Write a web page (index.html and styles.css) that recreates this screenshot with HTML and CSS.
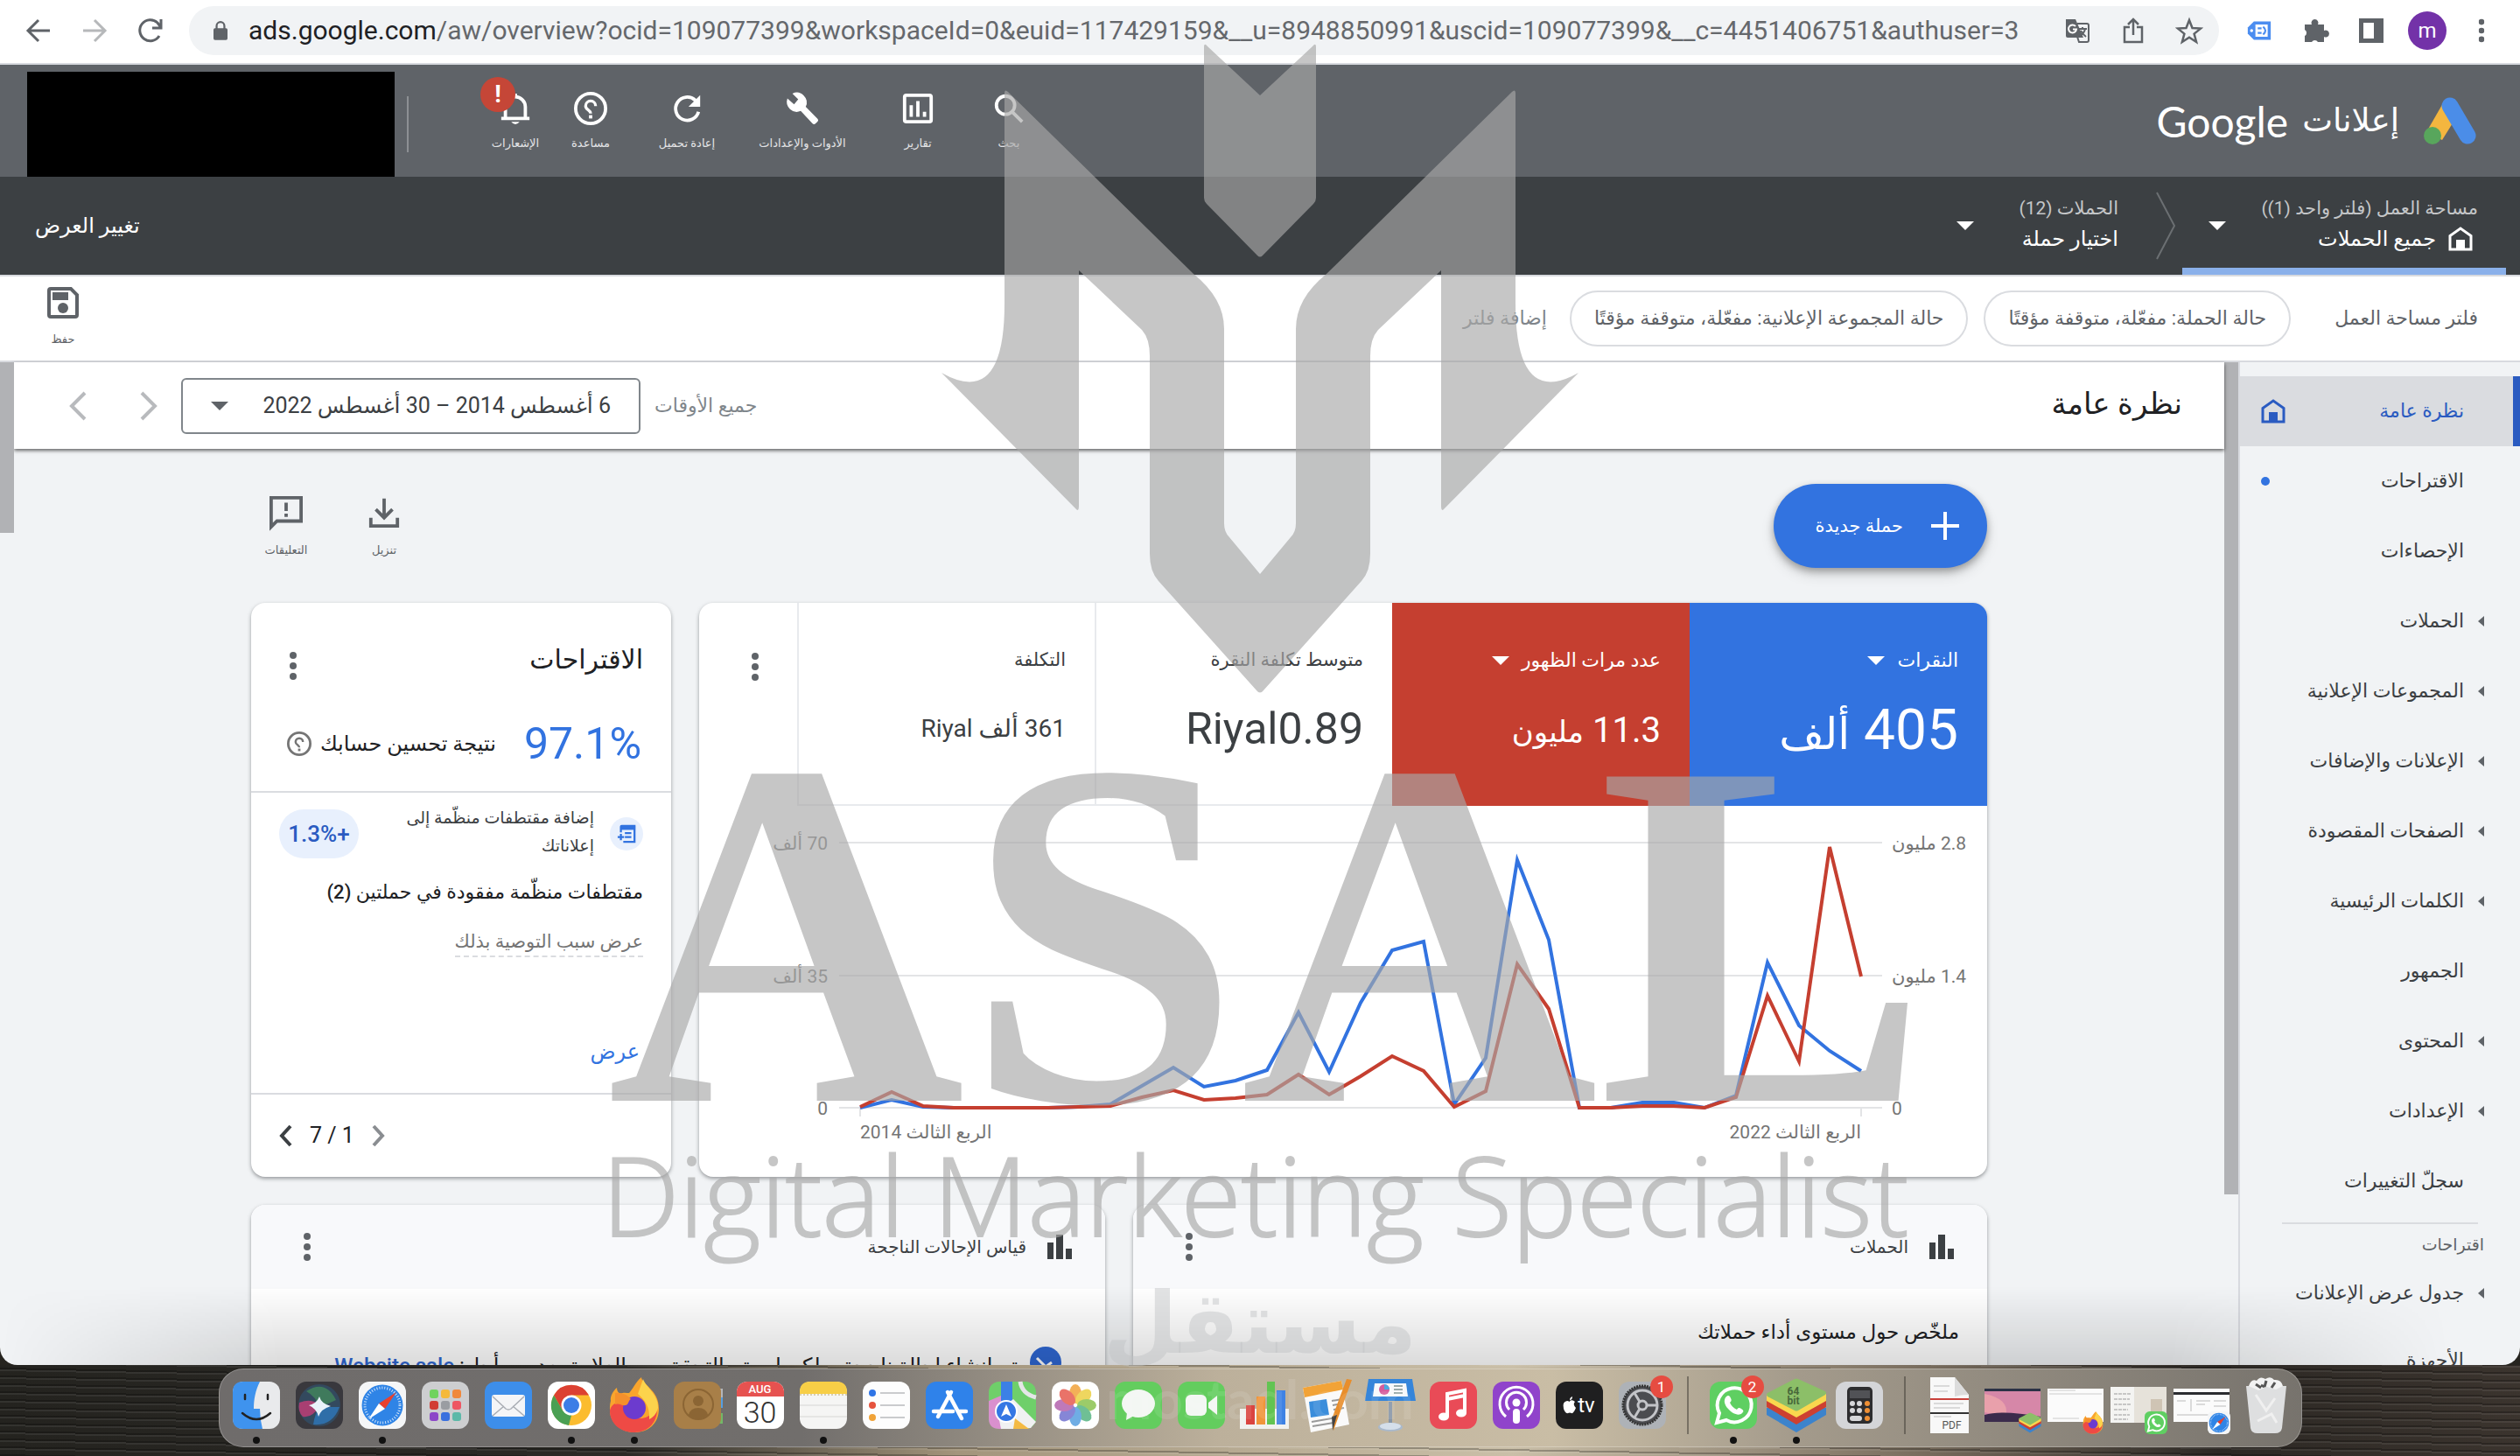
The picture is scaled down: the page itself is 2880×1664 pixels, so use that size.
FILE: index.html
```html
<!DOCTYPE html>
<html lang="ar" dir="rtl">
<head>
  <meta charset="UTF-8">
  <meta name="viewport" content="width=device-width, initial-scale=1.0">
  <title>نظرة عامة - إعلانات Google</title>
  <link rel="stylesheet" href="styles.css">
</head>
<body>
  <svg class="sprite" aria-hidden="true">
    <symbol id="dots" viewBox="0 0 8 34"><circle cx="4" cy="5" r="4"/><circle cx="4" cy="17" r="4"/><circle cx="4" cy="29" r="4"/></symbol>
    <symbol id="caret" viewBox="0 0 20 10"><path d="M0 0h20L10 10z"/></symbol>
    <symbol id="bars" viewBox="0 0 28 28"><path d="M0 9h7v19H0zM10 0h8v28h-8zM21 16h7v12h-7z"/></symbol>
    <symbol id="home" viewBox="0 0 28 28"><path d="M2 26V10.500L14 2l12 8.500V26z" fill="none" stroke="currentColor" stroke-width="3"/><path d="M9 15h10v11H9z"/></symbol>
    <symbol id="help" viewBox="0 0 40 40"><circle cx="20" cy="20" r="18" fill="none" stroke="currentColor" stroke-width="4"/><path d="M26 17a6 6 0 0 0-12 0c0 5 6 4.500 6 9" fill="none" stroke="currentColor" stroke-width="3.500"/><path d="M18 28h4v4h-4z"/></symbol>
    <symbol id="chrome" viewBox="0 0 54 54"><rect width="54" height="54" rx="12" fill="#fff"/><circle cx="27" cy="27" r="23" fill="#fbbc2f"/><path d="M7 15.500A23 23 0 0 1 47 15.500H27l-10 17.500z" fill="#dc4132"/><path d="M7 15.500L17 33l10 5.500L24 50A23 23 0 0 1 7 15.500z" fill="#4aa053"/><circle cx="27" cy="27" r="11.500" fill="#fff"/><circle cx="27" cy="27" r="9" fill="#3c7de6"/></symbol>
    <symbol id="firefox" viewBox="0 0 60 64"><path d="M3 27C2 22 6 15 10 12c0 4 2 6 4 7 3-2 7-1 10-1 4-4 7-12 14-18 1 9 20 14 20 36 0 17-12 27-28 27S2 51 2 38c0-5 0-7 1-11z" fill="#f9a52d"/><path d="M2 38c2-8 10-12 16-6 2 9 9 16 20 15 8-1 13-5 18-13 1 17-10 29-26 29S2 53 2 38z" fill="#ee4a45"/><path d="M40 2c2 8 18 18 17 33-2 8-6 11-10 13 1-14-5-22-13-29z" fill="#fcd34c"/><circle cx="30" cy="35" r="13" fill="#6c3bce"/><path d="M8 18c8-1 14 2 18 7-3 1-2 6-6 7-5 1-7-3-12-1z" fill="#f5902c"/></symbol>
    <symbol id="safari" viewBox="0 0 54 54"><rect width="54" height="54" rx="12" fill="#f5f6f7"/><circle cx="27" cy="27" r="23.500" fill="#2f84e6"/><circle cx="27" cy="27" r="20" fill="none" stroke="#cfe4fb" stroke-width="3" stroke-dasharray="1 2"/><path d="M43 12L30 31l-7-6z" fill="#e8412f"/><path d="M11 43l12-18 7 6z" fill="#fff"/></symbol>
    <symbol id="whatsapp" viewBox="0 0 54 54"><rect width="54" height="54" rx="12" fill="#5fcf62"/><path d="M8 47l3-11A19.500 19.500 0 1 1 19 44z" fill="none" stroke="#fff" stroke-width="4"/><path d="M19 17c2-2 4-1 5 2 1 2 1 3-1 5 2 4 4 6 8 8 2-3 3-2 5-1 3 2 3 3 1 5-4 4-12 0-16-5-4-4-6-10-2-14z" fill="#fff"/></symbol>
    <symbol id="bluestacks" viewBox="0 0 70 62"><path d="M1 42l34 20 34-20v-8H1z" fill="#3c83cc"/><path d="M1 33l34 20 34-20v-8H1z" fill="#cd4031"/><path d="M1 26l34 19 34-19v-8H1z" fill="#f9d74e"/><path d="M33 1q2-1 4 0l31 14q2 2 0 4L37 37q-2 1-4 0L2 21q-2-2 0-4z" fill="#8cbf68"/></symbol>
  </svg>

  <div class="window">
    <!-- browser toolbar -->
    <div class="browser" dir="ltr">
      <button class="nav-btn" aria-label="Back"><svg viewBox="0 0 28 28"><path d="M27 14H3M14 2L2 14l12 12"/></svg></button>
      <button class="nav-btn off" aria-label="Forward"><svg viewBox="0 0 28 28"><path d="M1 14h24M14 2l12 12-12 12"/></svg></button>
      <button class="nav-btn" aria-label="Reload"><svg viewBox="0 0 28 28"><path d="M24 20A12 12 0 1 1 22 5l3 4M26 1v10H16"/></svg></button>
      <div class="address">
        <svg class="lock" viewBox="0 0 18 24"><rect y="9" width="18" height="15" rx="2" fill="#5f6368"/><path d="M4 10V6a5 5 0 0 1 10 0v4" fill="none" stroke="#5f6368" stroke-width="2.500"/></svg>
        <span class="url"><b>ads.google.com</b>/aw/overview?ocid=109077399&amp;workspaceId=0&amp;euid=117429159&amp;__u=8948850991&amp;uscid=109077399&amp;__c=4451406751&amp;authuser=3</span>
        <div class="address-icons">
          <button aria-label="Translate"><svg viewBox="0 0 28 28"><path d="M1 1h11l9 21H3q-2 0-2-2z" fill="#5f6368"/><path d="M14 6h11q2 0 2 2v17q0 2-2 2h-9l-2-6" fill="none" stroke="#5f6368" stroke-width="2"/><path d="M12 9a4.500 4.500 0 1 0 1 3.500H9" fill="none" stroke="#fff" stroke-width="2"/><path d="M16 12h9M20 10v2M23 12q-1 5-6 8M18 14q2 4 6 7" fill="none" stroke="#5f6368" stroke-width="2"/></svg></button>
          <button aria-label="Share"><svg viewBox="0 0 28 28"><path d="M10 10H4v17h20V10h-6M14 19V2M8 7l6-6 6 6" fill="none" stroke="#5f6368" stroke-width="2.500"/></svg></button>
          <button aria-label="Bookmark"><svg viewBox="0 0 28 28"><path d="M14 2l3.500 9 9.500.6-7.400 6 2.500 9.400-8.100-5.300L5.900 27l2.500-9.400-7.400-6 9.500-.6z" fill="none" stroke="#5f6368" stroke-width="2.500"/></svg></button>
        </div>
      </div>
      <div class="extensions">
        <button aria-label="Tag Assistant"><svg viewBox="0 0 32 28"><path d="M9 2h22v24H9L1 18v-8z" fill="#4b8df0"/><circle cx="6" cy="14" r="2" fill="#fff"/><path d="M11 6h16v16H11z" fill="#fff"/><path d="M14 11h5M14 17h5M21 9q6 5 0 10" fill="none" stroke="#4b8df0" stroke-width="2.500"/></svg></button>
        <button aria-label="Extensions"><svg viewBox="0 0 28 28"><path d="M2 7h8a4 4 0 1 1 7 0h7v7a4 4 0 1 1 0 7v6h-7a4 4 0 0 0-7 0H2v-7a4 4 0 0 0 0-7z" fill="#5f6368"/></svg></button>
        <button aria-label="Side panel"><svg viewBox="0 0 28 28"><path d="M0 0h28v28H0zM5 5v18h12V5z" fill="#5f6368" fill-rule="evenodd"/></svg></button>
        <button class="avatar" aria-label="Profile">m</button>
        <button aria-label="Menu"><svg class="menu-dots" viewBox="0 0 8 34" fill="#5f6368"><use href="#dots"/></svg></button>
      </div>
    </div>

    <!-- product header -->
    <header class="topbar">
      <a class="logo" href="#">
        <svg viewBox="0 0 60 54"><path d="M22 7L3 40l18 9 18-29z" fill="#f4b63f"/><path d="M30 10l20 34" stroke="#4b8de8" stroke-width="19" stroke-linecap="round"/><circle cx="10" cy="44" r="10" fill="#58a65c"/></svg>
        <span>إعلانات <b>Google</b></span>
      </a>
      <nav class="tools">
        <button class="tool"><svg viewBox="0 0 40 40"><circle cx="16" cy="16" r="11" fill="none" stroke="#fff" stroke-width="4"/><path d="M24 24l12 12" stroke="#fff" stroke-width="4"/></svg><span>بحث</span></button>
        <button class="tool"><svg viewBox="0 0 40 40"><rect x="4" y="4" width="32" height="32" rx="2" fill="none" stroke="#fff" stroke-width="4"/><path d="M12 16v14M20 11v19M28 24v6" stroke="#fff" stroke-width="4"/></svg><span>تقارير</span></button>
        <button class="tool tool-wide"><svg viewBox="0 0 40 40"><path d="M38 32L24 18A12 12 0 0 0 8 2l7 7-5 6-8-7A12 12 0 0 0 18 23l14 15q2 2 4 0l2-2q2-2 0-4z" fill="#fff"/></svg><span>الأدوات والإعدادات</span></button>
        <button class="tool"><svg viewBox="0 0 40 40"><path d="M34 24A14 14 0 1 1 30 10l4 5" fill="none" stroke="#fff" stroke-width="4"/><path d="M36 4v14H22z" fill="#fff"/></svg><span>إعادة تحميل</span></button>
        <button class="tool tool-help"><svg viewBox="0 0 40 40" fill="#fff" color="#fff"><use href="#help"/></svg><span>مساعدة</span></button>
        <button class="tool tool-alerts"><svg viewBox="0 0 40 40"><path d="M8 32V18a12 12 0 0 1 24 0v14M3 32h34" fill="none" stroke="#fff" stroke-width="4"/><path d="M15 36h10q-5 6-10 0M18 2h4v5h-4z" fill="#fff"/></svg><span>الإشعارات</span><i class="alert">!</i></button>
      </nav>
      <div class="account"></div>
    </header>

    <!-- breadcrumbs -->
    <div class="crumbs">
      <button class="crumb active">
        <span class="crumb-text"><small>مساحة العمل (فلتر واحد (1))</small><strong><svg class="i28" fill="currentColor"><use href="#home"/></svg>جميع الحملات</strong></span>
        <svg class="caret"><use href="#caret"/></svg>
      </button>
      <svg class="crumb-sep" viewBox="0 0 22 76"><path d="M1 0l20 38L1 76"/></svg>
      <button class="crumb">
        <span class="crumb-text"><small>الحملات (12)</small><strong>اختيار حملة</strong></span>
        <svg class="caret"><use href="#caret"/></svg>
      </button>
      <button class="change-view">تغيير العرض</button>
    </div>

    <!-- filters -->
    <div class="filters">
      <span class="filters-label">فلتر مساحة العمل</span>
      <button class="chip">حالة الحملة: مفعّلة، متوقفة مؤقتًا</button>
      <button class="chip">حالة المجموعة الإعلانية: مفعّلة، متوقفة مؤقتًا</button>
      <button class="add-filter">إضافة فلتر</button>
      <button class="save"><svg viewBox="0 0 36 36"><path d="M2 4q0-2 2-2h23l7 7v23q0 2-2 2H4q-2 0-2-2z" fill="none" stroke="#5f6368" stroke-width="4"/><path d="M6 6h18v9H6z" fill="#5f6368"/><circle cx="18" cy="24" r="6" fill="#5f6368"/></svg><span>حفظ</span></button>
    </div>

    <div class="workspace">
      <nav class="sidebar">
        <a class="item on" href="#">نظرة عامة<svg class="i28" fill="currentColor"><use href="#home"/></svg></a>
        <a class="item new" href="#">الاقتراحات</a>
        <a class="item" href="#">الإحصاءات</a>
        <a class="item sub" href="#">الحملات</a>
        <a class="item sub" href="#">المجموعات الإعلانية</a>
        <a class="item sub" href="#">الإعلانات والإضافات</a>
        <a class="item sub" href="#">الصفحات المقصودة</a>
        <a class="item sub" href="#">الكلمات الرئيسية</a>
        <a class="item" href="#">الجمهور</a>
        <a class="item sub" href="#">المحتوى</a>
        <a class="item sub" href="#">الإعدادات</a>
        <a class="item" href="#">سجلّ التغييرات</a>
        <p class="sidebar-title">اقتراحات</p>
        <a class="item item-short sub" href="#">جدول عرض الإعلانات</a>
        <a class="item" href="#">الأجهزة</a>
      </nav>
      <div class="scroll"><div class="thumb thumb-long"></div></div>

      <main class="pane">
        <div class="titlebar">
          <h1>نظرة عامة</h1>
          <span class="range-name">جميع الأوقات</span>
          <button class="range"><span>6 أغسطس 2014 – 30 أغسطس 2022</span><svg class="caret"><use href="#caret"/></svg></button>
          <button class="step" aria-label="التالي"><svg viewBox="0 0 20 32"><path d="M2 1l15 15L2 31"/></svg></button>
          <button class="step" aria-label="السابق"><svg viewBox="0 0 20 32"><path d="M18 1L3 16l15 15"/></svg></button>
        </div>

        <div class="content">
          <div class="actions">
            <button class="new-campaign"><svg viewBox="0 0 32 32"><path d="M16 0v32M0 16h32" stroke="#fff" stroke-width="4"/></svg>حملة جديدة</button>
            <div class="page-tools">
              <button class="page-tool"><svg viewBox="0 0 40 40"><path d="M20 3v22M10 16l10 10 10-10M4 26v10h32V26" fill="none" stroke="#5f6368" stroke-width="4"/></svg><span>تنزيل</span></button>
              <button class="page-tool"><svg viewBox="0 0 40 40"><path d="M2 37V2h36v28H9z" fill="none" stroke="#5f6368" stroke-width="4"/><path d="M18 8h4v10h-4zM18 21h4v4h-4z" fill="#5f6368"/></svg><span>التعليقات</span></button>
            </div>
          </div>

          <div class="row">
            <section class="card summary">
              <div class="metrics">
                <button class="metric blue"><span class="label">النقرات<svg class="caret"><use href="#caret"/></svg></span><span class="value v64">405 <span class="v50">ألف</span></span></button>
                <button class="metric red"><span class="label">عدد مرات الظهور<svg class="caret"><use href="#caret"/></svg></span><span class="value v40">11.3 <span class="v34">مليون</span></span></button>
                <button class="metric"><span class="label">متوسط تكلفة النقرة</span><span class="value v50">Riyal0.89</span></button>
                <button class="metric"><span class="label">التكلفة</span><span class="value v28">361 ألف Riyal</span></button>
                <button class="more" aria-label="المزيد"><svg><use href="#dots"/></svg></button>
              </div>
              <svg class="chart" viewBox="0 0 1472 424">
                <path class="grid" d="M160 42h1192M160 194h1192M160 345h1192M184 345v10M1328 345v10"/>
                <g class="axis">
                  <text x="147" y="50">70 ألف</text>
                  <text x="147" y="202">35 ألف</text>
                  <text x="147" y="353">0</text>
                  <g class="far">
                    <text x="1363" y="50">2.8 مليون</text>
                    <text x="1363" y="202">1.4 مليون</text>
                    <text x="1363" y="353">0</text>
                    <text x="184" y="380">الربع الثالث 2014</text>
                  </g>
                  <text x="1328" y="380">الربع الثالث 2022</text>
                </g>
                <polyline class="line clicks" points="184,345 220,336 256,344 291,345 327,345 363,345 399,345 434,344 470,341 506,320 542,299 577,321 613,314 649,302 685,236 720,304 756,225 792,165 828,155 863,341 899,288 935,62 971,153 1006,345 1042,345 1078,339 1114,339 1149,345 1185,331 1221,179 1257,251 1292,280 1328,303"/>
                <polyline class="line views" points="184,344 220,327 256,343 291,345 327,345 363,345 399,345 434,344 470,343 506,333 542,325 577,336 613,334 649,330 685,307 720,330 756,309 792,286 828,303 863,344 899,326 935,181 971,232 1006,345 1042,345 1078,343 1114,343 1149,345 1185,333 1221,217 1257,292 1292,47 1328,195"/>
              </svg>
            </section>

            <section class="card tips">
              <div class="tips-head"><h2>الاقتراحات</h2><button class="more" aria-label="المزيد"><svg><use href="#dots"/></svg></button></div>
              <div class="score"><strong>97.1%</strong><span>نتيجة تحسين حسابك</span><svg class="i28" fill="currentColor"><use href="#help"/></svg></div>
              <div class="tip">
                <div class="tip-row">
                  <span class="tip-icon"><svg viewBox="0 0 24 24"><path d="M5 10V3q0-1 1-1h16v20H8M10 11h8M10 16h8M1 16h8M5 12v8" fill="none" stroke="#3273e0" stroke-width="2.500"/><path d="M5 2h18v5H5z" fill="#3273e0"/></svg></span>
                  <p>إضافة مقتطفات منظّمة إلى إعلاناتك</p>
                  <span class="gain">+1.3%</span>
                </div>
                <h3>مقتطفات منظّمة مفقودة في حملتين (2)</h3>
                <a class="why" href="#">عرض سبب التوصية بذلك</a>
                <a class="view" href="#">عرض</a>
              </div>
              <div class="pager">
                <button class="off" aria-label="السابق"><svg viewBox="0 0 14 24"><path d="M2 1l10 11L2 23"/></svg></button>
                <span>1 / 7</span>
                <button aria-label="التالي"><svg viewBox="0 0 14 24"><path d="M12 1L2 12l10 11"/></svg></button>
              </div>
            </section>
          </div>

          <div class="row">
            <section class="card half">
              <div class="half-head"><svg class="i28" fill="#3c4043"><use href="#bars"/></svg><h4>الحملات</h4><button class="more" aria-label="المزيد"><svg><use href="#dots"/></svg></button></div>
              <p class="half-text">ملخّص حول مستوى أداء حملاتك</p>
            </section>
            <section class="card half">
              <div class="half-head"><svg class="i28" fill="#3c4043"><use href="#bars"/></svg><h4>قياس الإحالات الناجحة</h4><button class="more" aria-label="المزيد"><svg><use href="#dots"/></svg></button></div>
              <p class="half-text status"><svg viewBox="0 0 36 36"><circle cx="18" cy="18" r="18" fill="#2f67d2"/><path d="M8 13l10 10 7-5" fill="none" stroke="#fff" stroke-width="3"/></svg><span>تم إنشاء إحالة ناجحة، ولكن لم يتم التحقق من العلامة بعد من أجل: <a href="#">Website sale</a></span></p>
            </section>
          </div>
        </div>
      </main>
      <div class="scroll"><div class="thumb thumb-short"></div></div>
    </div>
    <div class="window-shade"></div>
  </div>

  <!-- dock -->
  <div class="dock-area" dir="ltr">
    <div class="dock">
      <button class="app open" aria-label="Finder"><svg viewBox="0 0 54 54"><rect width="54" height="54" rx="12" fill="#e9eaec"/><path d="M12 0h19c-5 10-7 20-7 31h7q0 12 3 23H12Q0 54 0 42V12Q0 0 12 0z" fill="#3f93ee"/><path d="M14 15v5M40 15v5M11 36q16 14 32 0" fill="none" stroke="#222" stroke-width="2.500" stroke-linecap="round"/></svg></button>
      <button class="app" aria-label="Siri"><svg viewBox="0 0 54 54"><rect width="54" height="54" rx="12" fill="#39383d"/><circle cx="27" cy="27" r="24" fill="#33495e"/><path d="M4 24q16-6 23 4-8 14-19 12-6-6-4-16z" fill="#a83f72"/><path d="M12 11q22-14 34 10-8 4-19 8-4-12-15-18z" fill="#3f7a5c"/><path d="M50 29q-8 22-30 20 2-14 8-20z" fill="#2f6ea8"/><path d="M27 17q2 8 13 11-11 3-14 12-2-9-11-13 9-2 12-10z" fill="#eaf2fb"/></svg></button>
      <button class="app open" aria-label="Safari"><svg><use href="#safari"/></svg></button>
      <button class="app" aria-label="Launchpad"><svg viewBox="0 0 54 54"><rect width="54" height="54" rx="12" fill="#cdced0"/><g><rect x="9" y="9" width="10" height="10" rx="3" fill="#70d35d"/><rect x="22" y="9" width="10" height="10" rx="3" fill="#f5b93c"/><rect x="35" y="9" width="10" height="10" rx="3" fill="#f0883c"/><rect x="9" y="22" width="10" height="10" rx="3" fill="#d13d34"/><rect x="22" y="22" width="10" height="10" rx="3" fill="#9a9da2"/><rect x="35" y="22" width="10" height="10" rx="3" fill="#ee5763"/><rect x="9" y="35" width="10" height="10" rx="3" fill="#8c47c8"/><rect x="22" y="35" width="10" height="10" rx="3" fill="#3a70de"/><rect x="35" y="35" width="10" height="10" rx="3" fill="#5cb9a8"/></g></svg></button>
      <button class="app" aria-label="Mail"><svg viewBox="0 0 54 54"><rect width="54" height="54" rx="12" fill="#3d8eea"/><rect x="8" y="15" width="38" height="25" rx="3" fill="#f4f5f7"/><path d="M9 17l15 14q3 2 6 0l15-14M9 39l13-11M45 39L32 28" fill="none" stroke="#a9adb4" stroke-width="1.500"/></svg></button>
      <button class="app open" aria-label="Chrome"><svg><use href="#chrome"/></svg></button>
      <button class="app open" aria-label="Firefox"><svg class="tall"><use href="#firefox"/></svg></button>
      <button class="app" aria-label="Contacts"><svg viewBox="0 0 54 54"><path d="M50 8h6v10h-6z" fill="#b4b6bb"/><path d="M50 18h6v12h-6z" fill="#559ee2"/><path d="M50 36h6v12h-6z" fill="#72b867"/><rect width="54" height="54" rx="12" fill="#a87f48"/><circle cx="28" cy="26" r="17" fill="none" stroke="#8b6534" stroke-width="2"/><circle cx="28" cy="22" r="6" fill="#8b6534"/><path d="M17 38q2-8 11-8t11 8q-11 9-22 0z" fill="#8b6534"/></svg></button>
      <button class="app calendar" aria-label="Calendar"><span class="month">AUG</span><span class="day">30</span></button>
      <button class="app open" aria-label="Notes"><svg viewBox="0 0 54 54"><rect width="54" height="54" rx="12" fill="#f5f5f4"/><path d="M0 14v-2Q0 0 12 0h30q12 0 12 12v2z" fill="#f7ce46"/><path d="M0 27h54M0 40h54" stroke="#d6d6d4"/><path d="M0 15h54" stroke="#b9a56a" stroke-dasharray="2 2"/></svg></button>
      <button class="app" aria-label="Reminders"><svg viewBox="0 0 54 54"><rect width="54" height="54" rx="12" fill="#fdfdfd"/><path d="M20 13h28M20 27h28M20 41h28" stroke="#b9babd" stroke-width="1.500"/><circle cx="11" cy="13" r="4" fill="#2f74e6"/><circle cx="11" cy="27" r="4" fill="#e5533d"/><circle cx="11" cy="41" r="4" fill="#f0a338"/></svg></button>
      <button class="app" aria-label="App Store"><svg viewBox="0 0 54 54"><rect width="54" height="54" rx="12" fill="#2f82ea"/><path d="M29 12L14 40M25 12l16 30M9 34h22M37 34h9" stroke="#fff" stroke-width="4.500" stroke-linecap="round"/></svg></button>
      <button class="app" aria-label="Maps"><svg viewBox="0 0 54 54"><rect width="54" height="54" rx="12" fill="#6fcf6a"/><path d="M0 22l14-6v38h-2Q0 54 0 42z" fill="#d990ce"/><path d="M14 0h13v54H14z" fill="#3c80e6"/><path d="M10 34l18-14 26 26-6 7-12 1H14z" fill="#f0f1f2"/><path d="M30 42l16 12H28z" fill="#f4ba44"/><path d="M36 0q2 14 18 18" fill="none" stroke="#e5e6e8" stroke-width="5"/><circle cx="20" cy="34" r="12" fill="#3577e4" stroke="#fff" stroke-width="2"/><path d="M20 26l6 14-6-3-6 3z" fill="#fff"/></svg></button>
      <button class="app" aria-label="Photos"><svg viewBox="0 0 54 54"><rect width="54" height="54" rx="12" fill="#fff"/><g opacity=".85"><ellipse cx="27" cy="14" rx="7" ry="11" fill="#f2a33b"/><ellipse cx="27" cy="14" rx="7" ry="11" fill="#ecd044" transform="rotate(45 27 27)"/><ellipse cx="27" cy="14" rx="7" ry="11" fill="#8bc34f" transform="rotate(90 27 27)"/><ellipse cx="27" cy="14" rx="7" ry="11" fill="#57b583" transform="rotate(135 27 27)"/><ellipse cx="27" cy="14" rx="7" ry="11" fill="#579fe0" transform="rotate(180 27 27)"/><ellipse cx="27" cy="14" rx="7" ry="11" fill="#7272cf" transform="rotate(225 27 27)"/><ellipse cx="27" cy="14" rx="7" ry="11" fill="#b562ad" transform="rotate(270 27 27)"/><ellipse cx="27" cy="14" rx="7" ry="11" fill="#e65b4f" transform="rotate(315 27 27)"/></g></svg></button>
      <button class="app" aria-label="Messages"><svg viewBox="0 0 54 54"><rect width="54" height="54" rx="12" fill="#63cd5e"/><ellipse cx="27" cy="25" rx="19" ry="16" fill="#f3f7f3"/><path d="M14 36l-1 8 9-5z" fill="#f3f7f3"/></svg></button>
      <button class="app" aria-label="FaceTime"><svg viewBox="0 0 54 54"><rect width="54" height="54" rx="12" fill="#63cd5e"/><rect x="9" y="15" width="24" height="24" rx="6" fill="#f3f7f3"/><path d="M35 24l10-8v22l-10-8z" fill="#f3f7f3"/></svg></button>
      <button class="app" aria-label="Numbers"><svg viewBox="0 0 54 54"><path d="M-1 31h56v23H-1z" fill="#f1f1ef"/><path d="M6 27h10v22H6z" fill="#da4440"/><path d="M18 17h10v32H18z" fill="#f0953a"/><path d="M30 0h9v49h-9z" fill="#62c452"/><path d="M41 10h10v39H41z" fill="#3e82e4"/></svg></button>
      <button class="app" aria-label="Pages"><svg class="tall" viewBox="0 0 60 64"><path d="M2 12L46 4l9 50-44 9z" fill="#fafafa"/><path d="M2 12L46 4l2 10L4 23z" fill="#f2a337"/><path d="M9 28l20-3 3 18-21 3z" fill="#3a8ddb"/><path d="M35 27l12-2M36 32l12-2M37 37l12-2M12 51l28-5M13 56l24-4" stroke="#999" stroke-width="2"/><path d="M52 2l6 1-16 44-5 14-1-16z" fill="#e88e2c"/><path d="M41 43l-5 18-1-16z" fill="#444"/></svg></button>
      <button class="app" aria-label="Keynote"><svg class="tall" viewBox="0 0 60 64"><path d="M28 28h4v30h-4z" fill="#8796a8"/><ellipse cx="30" cy="57" rx="14" ry="5" fill="#a9b9cc"/><ellipse cx="30" cy="56" rx="12" ry="4" fill="#d5dfea"/><path d="M5 2h50l4 25H1z" fill="#3585da"/><path d="M12 7h36l2 15H10z" fill="#f7f8fa"/><circle cx="23" cy="14" r="6" fill="#d55c9c"/><path d="M23 8a6 6 0 0 1 6 6h-6z" fill="#4aa8e0"/><path d="M34 10h10M34 14h10M34 18h10" stroke="#9aa" stroke-width="2"/></svg></button>
      <button class="app" aria-label="Music"><svg viewBox="0 0 54 54"><rect width="54" height="54" rx="12" fill="#e94b57"/><path d="M20 40V14l20-4v26M20 20l20-4" fill="none" stroke="#fff" stroke-width="4"/><ellipse cx="16" cy="40" rx="6" ry="4.500" fill="#fff"/><ellipse cx="36" cy="36" rx="6" ry="4.500" fill="#fff"/></svg></button>
      <button class="app" aria-label="Podcasts"><svg viewBox="0 0 54 54"><rect width="54" height="54" rx="12" fill="#9043cb"/><path d="M15 40a19 19 0 1 1 24 0M19 32a11.500 11.500 0 1 1 16 0" fill="none" stroke="#fff" stroke-width="3"/><circle cx="27" cy="24" r="4.500" fill="#fff"/><rect x="23" y="31" width="8" height="17" rx="4" fill="#fff"/></svg></button>
      <button class="app tv" aria-label="TV"><svg viewBox="0 0 16 20"><path d="M11 0q0 4-3 4 0-3 3-4zM8 5q3-2 6 1-3 3 1 7-3 7-5 6-2-1-4 0Q3 20 1 14q-2-8 4-9 1 0 3 1z" fill="#fff"/></svg><span>tv</span></button>
      <button class="app" aria-label="Settings"><svg viewBox="0 0 54 54"><rect width="54" height="54" rx="12" fill="#aeb2b7"/><circle cx="27" cy="27" r="22" fill="#4b4c50" stroke="#333" stroke-width="3" stroke-dasharray="2 1"/><circle cx="27" cy="27" r="17" fill="none" stroke="#c3c4c8" stroke-width="3"/><circle cx="27" cy="27" r="5" fill="none" stroke="#c3c4c8" stroke-width="3"/><path d="M32 27h12M24 23l-6-10M24 31l-6 10" stroke="#c3c4c8" stroke-width="3"/></svg><i class="badge">1</i></button>
      <i class="dock-sep"></i>
      <button class="app open" aria-label="WhatsApp"><svg><use href="#whatsapp"/></svg><i class="badge">2</i></button>
      <button class="app open" aria-label="BlueStacks"><svg class="wide"><use href="#bluestacks"/></svg><em class="bit">64<br>bit</em></button>
      <button class="app" aria-label="Calculator"><svg viewBox="0 0 54 54"><rect width="54" height="54" rx="12" fill="#d4d5d8"/><rect x="13" y="6" width="29" height="42" rx="5" fill="#2d2d2f"/><path d="M16 10h23v9H16z" fill="#515256"/><g fill="#d8d8da"><circle cx="19" cy="25" r="3"/><circle cx="27" cy="25" r="3"/><circle cx="19" cy="33" r="3"/><circle cx="27" cy="33" r="3"/><rect x="16" y="39" width="14" height="6" rx="3"/></g><g fill="#ee8f35"><circle cx="36" cy="25" r="3"/><circle cx="36" cy="33" r="3"/><circle cx="36" cy="42" r="3"/></g></svg></button>
      <i class="dock-sep"></i>
      <button class="file" aria-label="PDF"><svg viewBox="0 0 44 64"><path d="M0 0h28l16 20v44H0z" fill="#f8f8f8"/><path d="M28 0l16 20q-10 0-16 2z" fill="#dcdcdc"/><path d="M0 24h44v2H0z" fill="#c9403a"/><path d="M0 40h44v2H0z" fill="#333"/><path d="M4 10h18M4 16h16M4 30h34M4 35h30M4 45h20" stroke="#bbb"/></svg><span>PDF</span></button>
      <div class="minimized">
        <button class="mini" aria-label="BlueStacks"><svg viewBox="0 0 64 50"><path d="M0 6h64v38H0z" fill="#d687a8"/><path d="M0 6h64v3H0z" fill="#2b3246"/><path d="M0 12q30 6 24 26L0 33z" fill="#e9a0ab"/><path d="M0 36q20-6 64 2v6H0z" fill="#3b2b4c"/></svg><svg class="mini-app"><use href="#bluestacks"/></svg></button>
        <button class="mini" aria-label="Firefox"><svg viewBox="0 0 64 50"><path d="M0 6h64v38H0z" fill="#fbfbfb"/><path d="M2 12h60M2 8h30M6 40h30" stroke="#ccc"/></svg><svg class="mini-app"><use href="#firefox"/></svg></button>
        <button class="mini" aria-label="WhatsApp"><svg viewBox="0 0 64 50"><path d="M0 4h64v41H0z" fill="#f4f4f2"/><path d="M27 4h37v41H27z" fill="#e6e2da"/><path d="M46 18h13v18H46z" fill="#cfc4b4"/><path d="M4 12h20M4 18h18M4 24h20M4 30h16M4 36h18M4 41h16" stroke="#999" stroke-dasharray="4 1"/></svg><svg class="mini-app"><use href="#whatsapp"/></svg></button>
        <button class="mini" aria-label="Safari"><svg viewBox="0 0 64 50"><path d="M0 6h64v38H0z" fill="#fbfbfb"/><path d="M0 10h64v3H0z" fill="#2b2c30"/><path d="M20 18v14M4 20h10M26 20h16M46 20h14M26 24h10M46 26h14M4 36h56" stroke="#bbb"/></svg><svg class="mini-app"><use href="#safari"/></svg></button>
      </div>
      <button class="trash" aria-label="Trash"><svg viewBox="0 0 48 64"><path d="M1 10h46l-5 48q-1 6-8 6H14q-7 0-8-6z" fill="#dedfe0"/><path d="M12 20l12 18 10-14M14 50l16-8 6 10" fill="none" stroke="#f0f0f0" stroke-width="3"/><path d="M4 10q3-9 9-6 4-6 10-2 6-4 10 1 8-1 10 7l-8 4-10-3-10 4z" fill="#f2f2f2"/><path d="M12 8l6 4M24 4l-2 7M34 6l-4 6M18 9l4 2" stroke="#555" stroke-width="3"/></svg></button>
    </div>
  </div>

  <!-- portfolio watermark -->
  <div class="watermark" dir="ltr">
    <svg viewBox="0 0 2880 1664">
      <g class="wm">
        <path d="M1376 54q0-6 4-1l60 56 60-56q4-5 4 1v172q0 4-3 7l-58 59q-3 3-6 0l-58-59q-3-3-3-7z"/>
        <path d="M1148 107q0-6 4-2l212 208q35 28 35 63v222q0 10 6 16l35 42 35-42q6-6 6-16V376q0-35 35-63L1728 105q4-4 4 2v240q0 120 72 79L1650 582q-3 3-3-4V309l-72 68q-9 10-9 30v226q0 20-10 31l-112 125q-4 5-8 0L1324 664q-10-11-10-31V407q0-20-9-30l-72-68v269q0 7-3 4L1076 426q72 41 72-79z"/>
        <text class="wm-name" x="694" y="1258">ASAL</text>
        <text class="wm-role" x="688" y="1413">Digital Marketing Specialist</text>
      </g>
      <text class="wm-site" x="1440" y="1546" text-anchor="middle">مستقل</text>
      <text class="wm-url" x="1440" y="1622" text-anchor="middle">mostaql.com</text>
    </svg>
  </div>
</body>
</html>
```
FILE: styles.css
```css
* { margin: 0; padding: 0; box-sizing: border-box; }
body {
  font-family: Roboto, "DejaVu Sans", sans-serif;
  font-size: 22px;
  line-height: 32px;
  color: #3c4043;
  height: 100vh;
  display: flex;
  flex-direction: column;
  overflow: hidden;
  position: relative;
  background: #26241f;
}
button {
  font: inherit;
  color: inherit;
  background: none;
  border: none;
  cursor: pointer;
}
a { color: inherit; text-decoration: none; }
svg { display: block; flex: none; overflow: visible; }
.sprite { position: absolute; width: 0; height: 0; }
.i28 { width: 28px; height: 28px; }
.caret { width: 20px; height: 10px; fill: currentColor; }

.window {
  flex: 1;
  min-height: 0;
  display: flex;
  flex-direction: column;
  position: relative;
  overflow: hidden;
  background: #f1f3f5;
  border-radius: 0 0 20px 20px;
}

/* browser toolbar */
.browser {
  display: flex;
  align-items: center;
  height: 74px;
  padding: 0 32px 2px 30px;
  background: #fff;
  border-bottom: 2px solid #d8dadf;
}
.nav-btn { width: 28px; margin-right: 36px; }
.nav-btn svg { width: 28px; height: 28px; fill: none; stroke: #5f6368; stroke-width: 3; }
.nav-btn.off { opacity: .45; }
.nav-btn:nth-child(3) { margin-right: 30px; }
.address {
  flex: 1;
  display: flex;
  align-items: center;
  height: 56px;
  padding: 0 20px 0 28px;
  border-radius: 28px;
  background: #f1f3f5;
}
.lock { width: 16px; height: 24px; margin-right: 24px; }
.url { font-size: 30px; color: #65686c; flex: 1; white-space: nowrap; }
.url b { font-weight: 400; color: #202124; }
.address-icons { display: flex; gap: 36px; }
.address-icons svg, .extensions svg { width: 28px; height: 28px; }
.extensions { display: flex; align-items: center; gap: 36px; padding-left: 32px; }
.extensions .avatar {
  width: 44px;
  height: 44px;
  margin: 0 -8px;
  border-radius: 50%;
  background: #7332a8;
  color: #fff;
  font-size: 24px;
}
.extensions .menu-dots { width: 8px; height: 28px; margin: 0 8px; }

/* product header */
.topbar {
  display: flex;
  align-items: center;
  height: 128px;
  padding: 0 50px 0 31px;
  background: #5f6368;
  color: #fff;
}
.logo { display: flex; align-items: center; gap: 28px; font-size: 37px; }
.logo svg { width: 60px; height: 54px; }
.logo span { display: flex; align-items: center; gap: 16px; }
.logo b { font: 400 48px Lato, sans-serif; }
.tools { display: flex; margin-right: auto; padding: 4px 0 0 94px; }
.tool {
  display: flex;
  flex-direction: column;
  align-items: center;
  gap: 9px;
  width: 104px;
  font-size: 13px;
  line-height: 24px;
  color: #e3e4e6;
  white-space: nowrap;
  position: relative;
}
.tool svg { width: 38px; height: 38px; }
.tool-wide { width: 160px; }
.tool-help { width: 116px; }
.tool-alerts { width: 56px; }
.alert {
  position: absolute;
  top: -17px;
  left: -12px;
  width: 40px;
  height: 40px;
  border-radius: 50%;
  background: #c54637;
  color: #fff;
  font: 700 28px/40px Roboto, sans-serif;
}
.account {
  width: 436px;
  height: 120px;
  align-self: flex-end;
  background: linear-gradient(#8d9094, #8d9094) right center / 2px 64px no-repeat, linear-gradient(#000, #000) left / 420px 100% no-repeat;
}

/* breadcrumbs */
.crumbs {
  display: flex;
  align-items: center;
  height: 114px;
  padding-left: 40px;
  padding-right: 16px;
  background: #3c4043;
  border-bottom: 2px solid #d8dadf;
  color: #fff;
}
.crumb {
  display: flex;
  align-items: center;
  justify-content: space-between;
  height: 112px;
  width: 217px;
  padding: 0 32px 0 0;
}
.crumb.active {
  width: 370px;
  padding-left: 30px;
  background: linear-gradient(#8ab0ea, #8ab0ea) bottom / 100% 8px no-repeat;
}
.crumb-text { display: flex; flex-direction: column; padding-bottom: 4px; text-align: right; }
.crumb small { font-size: 21px; color: #c4c6c8; white-space: nowrap; line-height: 34px; }
.crumb strong { display: flex; align-items: center; gap: 14px; font-size: 24px; font-weight: 400; line-height: 36px; white-space: nowrap; }
.crumb strong svg { margin-right: 6px; }
.crumb-sep { width: 22px; height: 76px; fill: none; stroke: #6b6f72; stroke-width: 2; margin: 0 8px 0 11px; }
.change-view { margin-right: auto; font-size: 24px; }

/* filters */
.filters {
  display: flex;
  align-items: center;
  height: 98px;
  padding: 0 48px;
  gap: 18px;
  background: #fff;
  border-bottom: 2px solid #d8dadf;
  font-size: 22px;
  color: #5f6368;
}
.filters-label { margin-left: 32px; }
.chip {
  height: 64px;
  padding: 0 26px;
  border: 2px solid #dadce0;
  border-radius: 32px;
}
.add-filter { margin-right: 8px; color: #80868b; }
.save, .page-tool {
  display: flex;
  flex-direction: column;
  align-items: center;
  gap: 12px;
  font-size: 13px;
  line-height: 24px;
  color: #5f6368;
}
.save { margin-right: auto; width: 48px; }
.save svg { width: 36px; height: 36px; }

.workspace { flex: 1; min-height: 0; display: flex; }
.sidebar {
  width: 322px;
  padding-top: 16px;
  border-left: 2px solid #d8dadf;
  overflow: hidden;
}
.item {
  display: flex;
  align-items: center;
  justify-content: space-between;
  height: 80px;
  padding: 0 64px 0 24px;
  white-space: nowrap;
  position: relative;
}
.item.on { background: #dadce0; color: #2a5bc1; border-right: 8px solid #2a5bc1; padding-right: 56px; }
.item.new::after { content: ""; width: 10px; height: 10px; border-radius: 50%; background: #3273e0; }
.item.sub::before {
  content: "";
  position: absolute;
  right: 41px;
  border: 6px solid transparent;
  border-left: 0;
  border-right: 7px solid #5f6368;
}
.item-short { height: 74px; }
.sidebar-title {
  margin: 7px 48px 0;
  padding-top: 6px;
  border-top: 2px solid #dadce0;
  font-size: 19px;
  line-height: 36px;
  color: #5f6368;
  text-indent: -7px;
}
.scroll { width: 16px; }
.thumb { background: #b1b2b5; }
.thumb-long { height: 83%; }
.thumb-short { height: 17%; }

.pane { flex: 1; min-width: 0; }
.titlebar {
  display: flex;
  align-items: center;
  height: 99px;
  padding: 0 48px 0 56px;
  background: #fff;
  box-shadow: 0 2px 4px rgba(0, 0, 0, .6);
}
h1 { padding-bottom: 6px; font-size: 34px; font-weight: 400; line-height: 48px; color: #202124; }
.range-name { margin: 0 auto 0 16px; color: #80868b; }
.range {
  display: flex;
  align-items: center;
  justify-content: space-between;
  width: 525px;
  height: 64px;
  margin-left: 27px;
  padding: 0 32px;
  border: 2px solid #80868b;
  border-radius: 6px;
  font-size: 25px;
  white-space: nowrap;
}
.range .caret { color: #5f6368; }
.step { width: 27px; margin-left: 54px; }
.step:last-child { margin-left: 0; }
.step svg { width: 20px; height: 32px; fill: none; stroke: #b8babd; stroke-width: 4; }

.content { max-width: 1984px; margin: 0 auto; padding-top: 40px; }
.actions { display: flex; justify-content: space-between; margin-bottom: 40px; }
.new-campaign {
  display: flex;
  align-items: center;
  gap: 32px;
  height: 96px;
  width: 244px;
  padding: 0 32px;
  border-radius: 48px;
  background: #3273e0;
  color: #fff;
  font-size: 21px;
  white-space: nowrap;
  box-shadow: 0 4px 8px rgba(0, 0, 0, .3), 0 8px 16px rgba(0, 0, 0, .12);
}
.new-campaign svg { width: 32px; height: 32px; }
.page-tools { display: flex; gap: 32px; padding-top: 14px; }
.page-tool { width: 80px; }
.page-tool svg { width: 38px; height: 38px; }

.row { display: flex; gap: 32px; margin-bottom: 32px; }
.card {
  background: #fff;
  border-radius: 16px;
  overflow: hidden;
  box-shadow: 0 2px 4px rgba(60, 64, 67, .5);
}
.more { padding: 8px 12px; align-self: flex-start; }
.more svg { width: 8px; height: 34px; fill: #5f6368; }

/* summary */
.summary { flex: 1; min-width: 0; }
.metrics { display: flex; height: 232px; }
.metrics .more { margin: 48px auto 0 48px; }
.metric {
  width: 340px;
  padding: 48px 33px;
  display: flex;
  flex-direction: column;
  text-align: right;
  border-left: 2px solid #e8eaed;
  border-bottom: 2px solid #e8eaed;
}
.metric.blue { background: #3273e0; color: #fff; border: none; }
.metric.red { background: #c53f30; color: #fff; border: none; }
.metric .label { display: flex; align-items: center; gap: 14px; height: 36px; font-size: 21px; white-space: nowrap; }
.metric.blue .label, .metric.red .label { font-size: 22px; }
.value { height: 100px; line-height: 124px; white-space: nowrap; }
.v64 { font-size: 64px; }
.v50 { font-size: 50px; }
.v40 { font-size: 40px; }
.v34 { font-size: 34px; }
.v28 { font-size: 28px; }
.chart { width: 100%; }
.grid { stroke: #e3e4e6; stroke-width: 2; }
.axis { direction: rtl; font-size: 21px; fill: #757575; }
.far { text-anchor: end; }
.line { fill: none; stroke-width: 4; }
.clicks { stroke: #3273e0; }
.views { stroke: #c53f30; }

/* recommendations */
.tips { width: 480px; display: flex; flex-direction: column; }
.tips-head { display: flex; justify-content: space-between; height: 97px; padding: 42px 32px 0; }
.tips-head .more { margin-top: 5px; }
h2 { font-size: 30px; font-weight: 400; line-height: 46px; color: #202124; }
.score { display: flex; align-items: center; height: 120px; padding: 10px 34px 0; border-bottom: 2px solid #dadce0; color: #202124; }
.score strong { font-size: 50px; font-weight: 400; color: #3273e0; }
.score span { margin: 0 32px 0 10px; font-size: 24px; white-space: nowrap; }
.score svg { color: #757575; }
.tip { flex: 1; padding: 16px 32px 0; }
.tip-row { display: flex; gap: 18px; height: 70px; }
.tip-row p { flex: 1; margin-top: -3px; font-size: 19px; }
.tip-icon { width: 38px; height: 38px; margin-top: 12px; padding: 8px; border-radius: 50%; background: #e8f0fd; }
.tip-icon svg { width: 22px; height: 22px; }
.gain { width: 91px; height: 56px; border-radius: 28px; background: #e8f0fd; color: #2a5bc1; font-size: 26px; font-weight: 500; line-height: 56px; text-align: center; margin-top: 3px; }
h3 { margin-top: 6px; font-size: 22px; font-weight: 500; line-height: 44px; color: #202124; white-space: nowrap; }
.why { display: inline-block; margin-top: 18px; font-size: 21px; color: #757575; border-bottom: 2px dashed #dadce0; }
.view { display: block; margin-top: 92px; padding-right: 4px; color: #3273e0; font-size: 24px; }
.pager { display: flex; justify-content: flex-end; align-items: center; gap: 20px; height: 96px; padding: 0 33px; border-top: 2px solid #dadce0; font-size: 25px; color: #202124; }
.pager svg { width: 14px; height: 24px; fill: none; stroke: #3c4043; stroke-width: 4; }
.pager .off svg { stroke: #8a8d91; }

/* half-width cards */
.half { flex: 1; height: 400px; }
.half-head { display: flex; align-items: center; gap: 24px; height: 96px; padding: 0 38px 0 48px; background: #f8f9fb; }
h4 { font-size: 20px; font-weight: 400; margin-left: auto; }
.half-head .more { align-self: center; }
.half-text { padding: 34px 32px 0; font-size: 23px; color: #202124; white-space: nowrap; }
.status { display: flex; align-items: center; gap: 14px; padding: 64px 50px 0; }
.status span { padding-top: 8px; font-size: 24px; }
.status svg { width: 36px; height: 36px; }
.status a { color: #2f67d2; font-weight: 500; }

.window-shade {
  position: absolute;
  right: 0;
  bottom: 0;
  left: 0;
  height: 90px;
  background: linear-gradient(transparent, rgba(0, 0, 0, .14));
  mask-image: linear-gradient(90deg, transparent, #000 320px, #000 calc(100% - 400px), transparent calc(100% - 80px));
  pointer-events: none;
}

/* dock */
.dock-area {
  display: flex;
  justify-content: center;
  height: 104px;
  padding: 4px 0 10px;
  background:
    repeating-linear-gradient(1deg, rgba(0, 0, 0, .25) 0 2px, transparent 2px 7px, rgba(255, 255, 255, .07) 7px 9px),
    linear-gradient(90deg, #24231f, #2c2a26 25%, #a3957c 38%, #cabfa8 60%, #7a6e5f 76%, #2c2824 88%, #3b342e);
}
.dock {
  display: flex;
  align-items: center;
  gap: 18px;
  padding: 0 16px 6px 15px;
  border-radius: 28px;
  border: 1px solid rgba(255, 255, 255, .25);
  background: linear-gradient(90deg, #6f6c6b, #716e6c 28%, #bcb09b 48%, #c9bda5 64%, #a39a8b 76%, #77736d);
}
.app { width: 54px; height: 54px; position: relative; }
.app svg { width: 54px; height: 54px; }
.app .tall { width: 60px; height: 64px; margin: -6px -3px; }
.app .wide { width: 70px; height: 62px; margin: -4px -8px; }
.app.open::after {
  content: "";
  position: absolute;
  left: 23px;
  bottom: -17px;
  width: 8px;
  height: 8px;
  border-radius: 50%;
  background: #111;
}
.badge {
  position: absolute;
  top: -7px;
  right: -8px;
  width: 26px;
  height: 26px;
  border-radius: 50%;
  background: #e64c41;
  color: #fff;
  font-size: 17px;
  line-height: 26px;
  font-style: normal;
}
.calendar { display: flex; flex-direction: column; border-radius: 12px; background: #fff; overflow: hidden; color: #333; }
.month { background: #e65250; color: #fff; font-size: 13px; font-weight: 500; line-height: 17px; }
.day { font-size: 34px; line-height: 37px; font-weight: 300; }
.tv { display: flex; align-items: center; justify-content: center; gap: 1px; border-radius: 12px; background: #1f1f20; color: #fff; font-size: 24px; }
.app.tv svg { width: 16px; height: 20px; }
.bit { position: absolute; top: 6px; left: 17px; font: 700 12px/11px Roboto, sans-serif; color: #47683a; }
.dock-sep { width: 2px; height: 66px; margin: 0 6px; background: rgba(60, 55, 50, .5); }
.file { width: 48px; height: 64px; position: relative; }
.file svg { width: 44px; height: 64px; margin-left: 4px; }
.file span { position: absolute; left: 18px; bottom: 2px; font-size: 12px; line-height: 14px; color: #555; }
.minimized { display: flex; gap: 8px; }
.mini { width: 64px; height: 50px; position: relative; }
.mini svg { width: 64px; height: 50px; }
.mini .mini-app { position: absolute; right: -1px; bottom: -8px; width: 26px; height: 26px; }
.trash svg { width: 48px; height: 64px; }

/* watermark */
.watermark { position: absolute; inset: 0; pointer-events: none; }
.watermark svg { width: 100%; height: 100%; }
.wm { fill: #a8a8a8; opacity: .65; }
.wm-name { font: 700 566px "Liberation Serif", serif; }
.wm-role { font: 300 125px "Open Sans", sans-serif; stroke: #a8a8a8; stroke-width: 2; }
.wm-site { font: 700 98px "DejaVu Sans", sans-serif; fill: rgba(190, 194, 196, .45); }
.wm-url { font: 700 62px Lato, sans-serif; fill: rgba(255, 255, 255, .1); }
```
